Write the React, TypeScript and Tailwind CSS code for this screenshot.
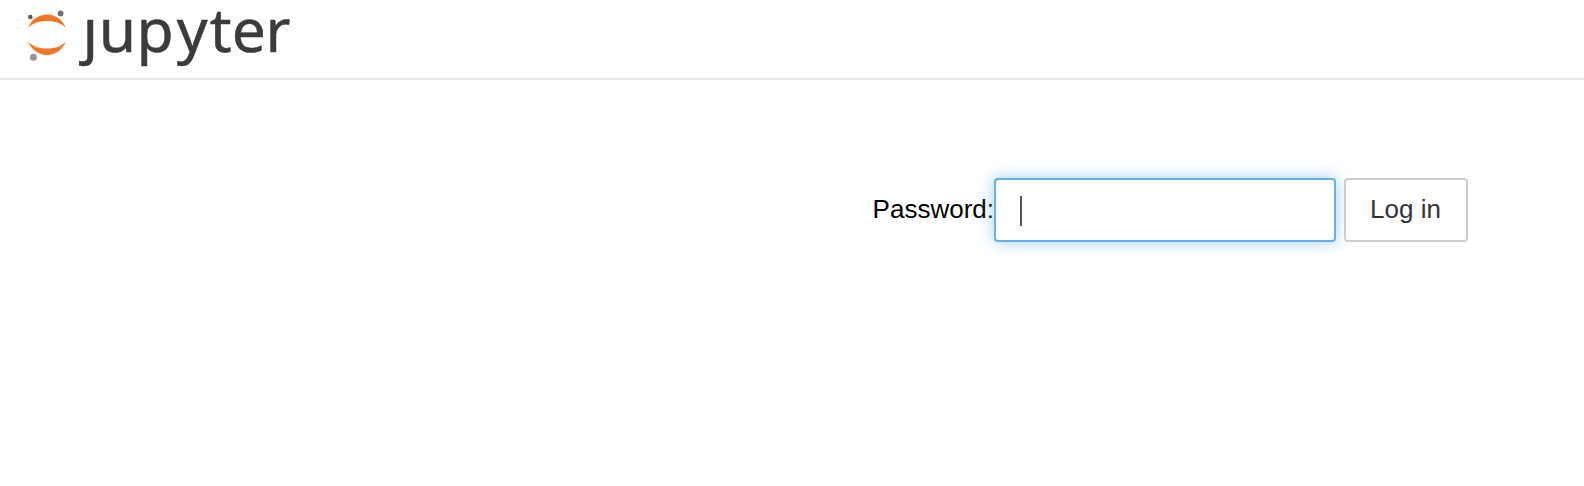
import React from "react";

function Logo() {
  return (
    <svg width="272" height="78" viewBox="20 0 272 78" role="img" aria-label="jupyter" className="block overflow-visible">
      <path d="M28 28C31 20 38.5 14.4 47 14.4C55.5 14.4 63 20 66 28C62.500 23.500 55.500 20.900 47 20.900C38.500 20.900 31.500 23.500 28 28Z" fill="#f37726" />
      <path d="M28 41.300C31 49.500 38.500 55 47 55C55.500 55 63 49.500 66 41.300C62.500 45.900 55.500 48.600 47 48.600C38.500 48.600 31.500 45.900 28 41.300Z" fill="#f37726" />
      <circle cx="30.300" cy="17" r="2.300" fill="#58595b" />
      <circle cx="60.600" cy="13.400" r="2.900" fill="#6d6e71" />
      <circle cx="33.400" cy="57.300" r="3.500" fill="#939598" />
      <text
        x="82.6 98.8 136.6 176.7 209.800 231.700 265.600"
        y="51.6"
        fontSize="60.500"
        fill="#3b3b3c"
        stroke="#3b3b3c"
        strokeWidth="0.5"
        className="font-['Noto_Sans',sans-serif]"
      >
        ȷupyter
      </text>
    </svg>
  );
}

export default function App() {
  return (
    <div className="h-[486px] w-full overflow-hidden bg-white font-['Liberation_Sans',Arial,sans-serif] text-[26px] leading-[36px]">
      <header className="flex h-20 border-b-2 border-[#e7e7e7] pl-5">
        <Logo />
      </header>
      <main className="flex justify-end pt-[98px] pr-[116px]">
        <form className="flex h-16 items-center" onSubmit={(e) => e.preventDefault()}>
          <label className="-mt-0.5 whitespace-nowrap text-black">Password:</label>
          <div className="flex h-16 w-[342px] items-center rounded-[4px] border-2 border-[#66afe9] bg-white pl-6 shadow-[inset_0_2px_2px_rgba(0,0,0,0.02),0_0_16px_rgba(102,175,233,0.6)]">
            <span className="mt-0.5 h-[30px] w-0.5 bg-[#555555]" />
          </div>
          <button className="ml-2 h-16 w-[124px] rounded-[4px] border-2 border-[#cccccc] bg-white pr-px pb-0.5 text-[#333333]">
            Log in
          </button>
        </form>
      </main>
    </div>
  );
}
